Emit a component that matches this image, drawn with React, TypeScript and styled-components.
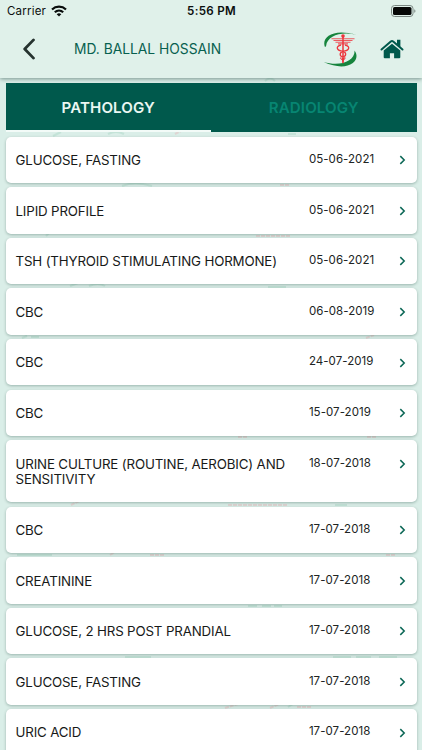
import React from "react";
import styled, { createGlobalStyle } from "styled-components";

const GlobalStyle = createGlobalStyle`
  * { box-sizing: border-box; }
  html, body { margin: 0; padding: 0; }
  body { overflow: hidden; background: #daeee8; font-family: Inter, "Liberation Sans", sans-serif; }
  svg { display: block; }
`;

const Screen = styled.div`
  position: relative;
  display: flex;
  flex-direction: column;
  width: 422px;
  height: 750px;
  overflow: hidden;
  background: #daeee8;
`;

const Watermark = styled.svg`
  position: absolute;
  inset: 0;
`;

const Header = styled.header`
  position: relative;
  flex: none;
  height: 78px;
  background: #e0f1ea;
  box-shadow: 0 1px 4px rgba(0, 40, 30, 0.45);
`;

const StatusBar = styled.div`
  display: grid;
  grid-template-columns: 1fr auto 1fr;
  align-items: center;
  height: 22px;
  padding: 0 6px 0 7px;
  color: #0b0f0e;
`;

const Carrier = styled.div`
  display: flex;
  align-items: center;
  gap: 5px;
  font-size: 11.5px;
  letter-spacing: 0.2px;
`;

const Clock = styled.div`
  font-size: 11.6px;
  font-weight: 600;
  letter-spacing: 0.3px;
`;

const Battery = styled.div`
  justify-self: end;
  margin-bottom: 1px;
`;

const TitleBar = styled.div`
  display: flex;
  align-items: center;
  height: 54px;
  padding: 0 18px 0 22px;
`;

const BackButton = styled.button`
  width: 52px;
  padding: 0;
  border: 0;
  background: none;
`;

const Title = styled.h1`
  flex: 1;
  margin: 0;
  color: #08604f;
  font-size: 13.8px;
  font-weight: 400;
  line-height: 18px;
  white-space: nowrap;
`;

const Logo = styled.div`
  margin: 0 23px 1px 0;
`;

const Tabs = styled.nav`
  position: relative;
  flex: none;
  display: grid;
  grid-template-columns: 1fr 1fr;
  height: 49px;
  margin: 5px 5.5px 0;
  background: #00594c;
`;

const Tab = styled.button<{ $active?: boolean }>`
  padding: 2px 0 0;
  border: 0;
  border-bottom: 2px solid ${(p) => (p.$active ? "#f3fbf8" : "transparent")};
  background: none;
  color: ${(p) => (p.$active ? "#eaf7f2" : "#078572")};
  font-family: inherit;
  font-size: 15.1px;
  font-weight: 600;
  letter-spacing: 0.1px;
`;

const List = styled.main`
  position: relative;
  display: flex;
  flex-direction: column;
  gap: 4.25px;
  padding: 4.7px 5.5px 0;
`;

const Row = styled.article<{ $tall?: boolean }>`
  flex: none;
  display: grid;
  grid-template-columns: 293px 1fr auto;
  height: ${(p) => (p.$tall ? "62.2px" : "46.35px")};
  padding: 15.4px 10.5px 0 10px;
  border-radius: 5px;
  background: #fff;
  box-shadow: 0 1px 3px rgba(0, 45, 35, 0.3);
`;

const TestName = styled.div`
  padding-top: 0.9px;
  color: #171918;
  font-size: 13.3px;
  line-height: 15.5px;
  letter-spacing: -0.15px;
  white-space: pre-line;
`;

const DateText = styled.time`
  padding-left: 0.4px;
  color: #202423;
  font-size: 11.5px;
  line-height: 14px;
  letter-spacing: 0.05px;
`;

const Arrow = styled.svg`
  margin-top: 3.2px;
`;

const tests: { name: string; date: string; tall?: boolean }[] = [
  { name: "GLUCOSE, FASTING", date: "05-06-2021" },
  { name: "LIPID PROFILE", date: "05-06-2021" },
  { name: "TSH (THYROID STIMULATING HORMONE)", date: "05-06-2021" },
  { name: "CBC", date: "06-08-2019" },
  { name: "CBC", date: "24-07-2019" },
  { name: "CBC", date: "15-07-2019" },
  { name: "URINE CULTURE (ROUTINE, AEROBIC) AND\nSENSITIVITY", date: "18-07-2018", tall: true },
  { name: "CBC", date: "17-07-2018" },
  { name: "CREATININE", date: "17-07-2018" },
  { name: "GLUCOSE, 2 HRS POST PRANDIAL", date: "17-07-2018" },
  { name: "GLUCOSE, FASTING", date: "17-07-2018" },
  { name: "URIC ACID", date: "17-07-2018" },
];

const WifiIcon = () => (
  <svg width="16" height="12" viewBox="0 0 16 12" fill="none" stroke="#080c0b" strokeWidth="2.2">
    <path d="M1 4.5a10.2 10.2 0 0 1 14 0" />
    <path d="M3.8 7.3a6.2 6.2 0 0 1 8.4 0" />
    <path d="M8 11.6 5.7 9.3a3.4 3.4 0 0 1 4.6 0Z" fill="#080c0b" stroke="none" />
  </svg>
);

const BatteryIcon = () => (
  <svg width="25" height="12" viewBox="0 0 25 12">
    <rect x="0.5" y="0.5" width="21.5" height="11" rx="3" fill="none" stroke="#7b8883" />
    <rect x="2" y="2" width="18.5" height="8" rx="1.6" fill="#050706" />
    <path d="M23.3 4.2c1.5.5 1.5 3.1 0 3.6Z" fill="#75827d" />
  </svg>
);

const LogoIcon = () => (
  <svg width="34" height="38" viewBox="0 0 34 38">
    <path d="M2 17.2C-2 7.4 9.8-2.3 33.5 4.9 18.7 1.1 4.1 5.5 3.1 16Z" fill="#16843d" />
    <path d="M31.6 20.5c7.2 10.3-6.6 22.7-31.1 11.6 16.5 4.8 31.4-.6 31.1-11.6Z" fill="#16843d" />
    <g fill="none" stroke="#ed353c">
      <path d="M20 7v26" strokeWidth="1.5" />
      <path d="M8.5 8.7h23M10.5 10.5h19M12.5 12.2h15M15 13.9h10" strokeWidth="1.1" opacity=".8" />
      <path d="M18 15c-6 1.6-4.3 5.5 2 6.4 4 1.3 3.1 5 0 5.4-3.5-.4-4-4.1 0-5.4 6.3-.9 8-4.8 2-6.4" strokeWidth="1.3" />
      <path d="M18.3 27c-1.8 1.5-.5 2.3 1.5 3.1 2-.8 3-1.6 1.7-3.1" strokeWidth="1" />
    </g>
    <circle cx="20" cy="6.1" r="1.8" fill="#ed353c" />
    <path d="m18.4 28 1.6 6 1.5-6" fill="#ed353c" />
  </svg>
);

const HomeIcon = () => (
  <svg width="24" height="20" viewBox="0 0 24 20" fill="#00594c">
    <path d="M12 4.8 3.7 11.6v6.6q0 1.1 1.1 1.1h5.1v-5h4.2v5h5.1q1.1 0 1.1-1.1v-6.6Z" />
    <path d="m1.5 10.5 9.3-8q1.2-1 2.4 0l9.3 8" fill="none" stroke="#00594c" strokeWidth="2" strokeLinecap="round" />
    <path d="M17 0.8h3.4v7.2L17 5.1Z" />
  </svg>
);

const App = () => (
  <Screen>
    <GlobalStyle />
    <Watermark width="422" height="750" fill="none" strokeWidth="2">
      <path d="M265 81q5-5 10 0M53 136l8-4M108 134q8-4 16 0M288 134h8M122 186q12-5 30 0M46 236l4-4M70 286l8-3M89 286q9-4 16 0M268 287h18M22 338l5-2M31 337h8M335 505h12M17 555h35M248 606h9M262 606h9M274 606h8M125 657h26M333 657h18M356 657h15M379 657h18M288 707l5-3" stroke="#94cdb7" opacity=".32" />
      <path d="M175 134l8-4M280 185h9M256 236h34M366 338l8-3M238 437h10M367 437h10M71 505l8-4M228 505h59M110 555l5-3M150 555h15M386 555h10M225 708l13-4M270 708l9-4M297 707h15" stroke="#e9a7ac" strokeDasharray="4 1" opacity=".35" />
    </Watermark>
    <Header>
      <StatusBar>
        <Carrier>Carrier<WifiIcon /></Carrier>
        <Clock>5:56 PM</Clock>
        <Battery><BatteryIcon /></Battery>
      </StatusBar>
      <TitleBar>
        <BackButton aria-label="Back">
          <svg width="14" height="22" viewBox="0 0 14 22" fill="none" stroke="#26332f" strokeWidth="2.8" strokeLinecap="round" strokeLinejoin="round">
            <path d="M11.5 1.9 2.7 11l8.8 9.1" />
          </svg>
        </BackButton>
        <Title>MD. BALLAL HOSSAIN</Title>
        <Logo><LogoIcon /></Logo>
        <HomeIcon />
      </TitleBar>
    </Header>
    <Tabs>
      <Tab $active>PATHOLOGY</Tab>
      <Tab>RADIOLOGY</Tab>
    </Tabs>
    <List>
      {tests.map((test, index) => (
        <Row key={index} $tall={test.tall}>
          <TestName>{test.name}</TestName>
          <DateText>{test.date}</DateText>
          <Arrow width="7" height="10" viewBox="0 0 7 10" fill="none" stroke="#0a6655" strokeWidth="1.5">
            <path d="m1.3 1.1 3.9 3.9-3.9 3.9" />
          </Arrow>
        </Row>
      ))}
    </List>
  </Screen>
);

export default App;
